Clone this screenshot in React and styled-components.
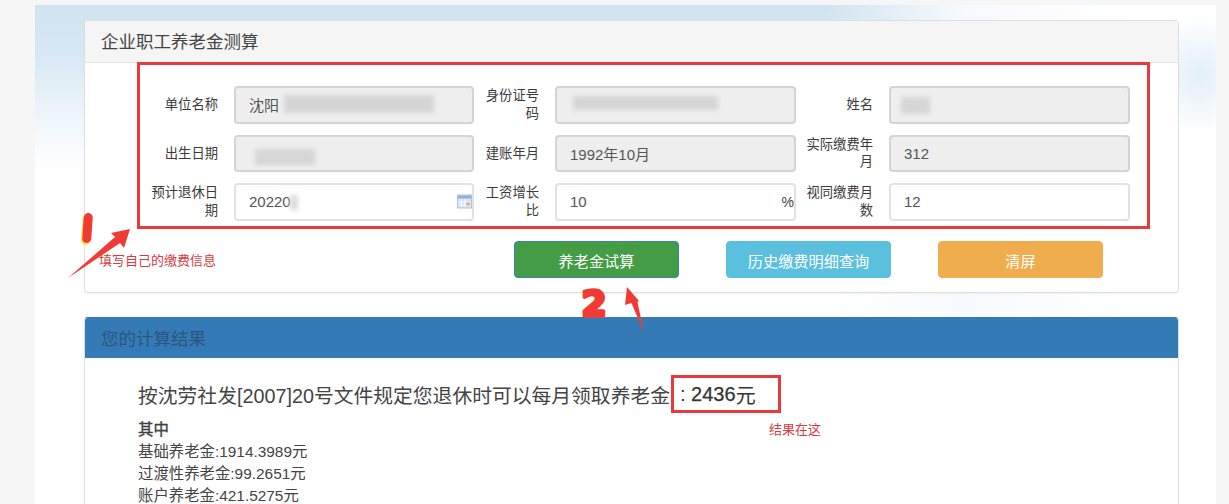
import React from 'react';
import styled, { createGlobalStyle } from 'styled-components';

const CJK = '"Liberation Sans", "Noto Sans CJK SC", sans-serif';

const GlobalStyle = createGlobalStyle`
  html, body {
    margin: 0;
    height: 504px;
    overflow: hidden;
    background: #f6f6f6;
    font-family: ${CJK};
    color: #333;
  }
  * {
    box-sizing: border-box;
  }
`;

const Shell = styled.div`
  position: relative;
  width: 1181px;
  height: 499px;
  margin: 5px 0 0 35px;
  padding: 15px 37px 0 49px;
  overflow: hidden;
  background:
    radial-gradient(ellipse 60px 60px at 1165px 70px, #e3eff7 0, rgba(255, 255, 255, 0) 100%),
    linear-gradient(90deg, rgba(255, 255, 255, 0) 0, rgba(255, 255, 255, 0) 790px, #f7fafc 930px, #fff 1100px),
    linear-gradient(180deg, #cfe4f1 0, #d6e8f3 50px, #eef5fa 110px, #fff 165px);
`;

const Panel = styled.section`
  background: #fff;
  border: 1px solid #ddd;
  border-top-color: ${({ $primary }) => ($primary ? '#337ab7' : '#ddd')};
  border-radius: 4px;
  box-shadow: 0 1px 1px rgba(0, 0, 0, 0.05);
  margin-bottom: 24px;
`;

const PanelHeader = styled.h3`
  margin: 0;
  height: ${({ $primary }) => ($primary ? '40px' : '42px')};
  padding: 0 16px ${({ $primary }) => ($primary ? '0' : '2px')};
  display: flex;
  align-items: center;
  font-size: 17.5px;
  font-weight: 400;
  color: ${({ $primary }) => ($primary ? '#2b577c' : '#444')};
  background: ${({ $primary }) => ($primary ? '#337ab7' : '#f5f5f5')};
  border-bottom: 1px solid ${({ $primary }) => ($primary ? '#337ab7' : '#e4e4e4')};
  border-radius: 3px 3px 0 0;
`;

const FormGrid = styled.div`
  display: grid;
  grid-template-columns: 86px 240px 81px 241px 93px 241px;
  grid-auto-rows: 37.5px;
  row-gap: 11px;
  width: 1013px;
  margin: -1px 0 0 52px;
  padding: 21px 0 5.5px 8px;
  border: 3px solid #e8393d;
`;

const FieldLabel = styled.label`
  align-self: center;
  padding-right: 16px;
  text-align: right;
  font-size: 13.3px;
  line-height: 17.5px;
  color: #3a3a3a;
`;

const FieldBox = styled.div`
  position: relative;
`;

const Input = styled.input`
  display: block;
  width: 100%;
  height: 100%;
  padding: 0 13px;
  font-family: ${CJK};
  font-size: 15px;
  color: #555;
  background: ${({ readOnly }) => (readOnly ? '#eee' : '#fff')};
  border: 2px solid ${({ readOnly }) => (readOnly ? '#d4d4d4' : '#e2e2e2')};
  border-radius: 4px;
  outline: none;
`;

const Smudge = styled.span`
  position: absolute;
  top: ${({ $top }) => $top}px;
  left: ${({ $left }) => $left}px;
  width: ${({ $width }) => $width}px;
  height: ${({ $height }) => $height}px;
  background: ${({ $tone }) => $tone || '#d6d6d6'};
  filter: blur(2px);
  pointer-events: none;
`;

const Suffix = styled.span`
  position: absolute;
  top: 11px;
  right: 2px;
  font-size: 14px;
  color: #444;
`;

const CalendarIcon = styled.svg`
  position: absolute;
  top: 11px;
  right: 2px;
  width: 15px;
  height: 15px;
`;

const ButtonRow = styled.div`
  display: flex;
  align-items: flex-start;
  gap: 47px;
  padding: 12px 0 14px 14px;
`;

const NoteText = styled.span`
  font-size: 13px;
  line-height: 16px;
  color: #d93a3e;
  white-space: nowrap;
`;

const FormNote = styled(NoteText)`
  width: 368px;
  margin-top: 12px;
`;

const ActionButton = styled.button`
  width: 165px;
  height: 37px;
  font-family: ${CJK};
  font-size: 15.2px;
  color: #fff;
  background: ${({ $color }) => $color};
  border: 1px solid ${({ $edge, $color }) => $edge || $color};
  border-radius: 4px;
`;

const ResultBody = styled.div`
  padding: 17px 0 0 53px;
`;

const ResultLine = styled.div`
  display: flex;
  align-items: center;
  height: 38px;
  font-size: 19.8px;
  color: #444;
`;

const ResultText = styled.span`
  padding-top: 1px;
  width: 533px;
  white-space: nowrap;
`;

const Amount = styled.span`
  width: 110px;
  height: 38px;
  display: flex;
  align-items: center;
  padding: 1px 0 0 6px;
  font-size: 20px;
  color: #333;
  border: 3px solid #e8393d;
`;

const AmountDigits = styled.span`
  -webkit-text-stroke: 0.25px #333;
`;

const DetailRow = styled.div`
  display: grid;
  grid-template-columns: 631px auto;
  padding-top: 5.5px;
`;

const ResultNote = styled(NoteText)`
  margin-top: 3.5px;
`;

const DetailLine = styled.div`
  font-size: 15.4px;
  line-height: 22.3px;
  color: #444;
  -webkit-text-stroke: ${({ $strong }) => ($strong ? '0.35px #333' : '0')};
`;

const NoteArrow = styled.svg`
  position: absolute;
  left: ${({ $left }) => $left}px;
  top: ${({ $top }) => $top}px;
  pointer-events: none;
`;

const BrushOne = styled.span`
  position: absolute;
  left: 48px;
  top: 208px;
  width: 9px;
  height: 30px;
  background: #f23a35;
  border-radius: 4.5px;
  box-shadow: -1px 2px 1px #f6e23a;
  transform: rotate(4deg);
`;

const rows = [
  { label: '单位名称', value: '沈阳', smudges: [{ top: 9, left: 50, width: 150, height: 18 }] },
  { label: '身份证号码', value: '', smudges: [{ top: 10, left: 18, width: 145, height: 14 }] },
  { label: '姓名', value: '', smudges: [{ top: 11, left: 12, width: 29, height: 17 }] },
  { label: '出生日期', value: '', smudges: [{ top: 14, left: 21, width: 60, height: 16 }] },
  { label: '建账年月', value: '1992年10月' },
  { label: '实际缴费年月', value: '312' },
  {
    label: '预计退休日期',
    value: '20220',
    editable: true,
    calendar: true,
    smudges: [{ top: 12, left: 56, width: 8, height: 15, tone: '#dcdcdc' }],
  },
  { label: '工资增长比', value: '10', editable: true, suffix: '%' },
  { label: '视同缴费月数', value: '12', editable: true },
];

const details = ['基础养老金:1914.3989元', '过渡性养老金:99.2651元', '账户养老金:421.5275元'];

const App = () => (
  <>
    <GlobalStyle />
    <Shell>
      <Panel>
        <PanelHeader>企业职工养老金测算</PanelHeader>
        <FormGrid>
          {rows.map((field) => (
            <React.Fragment key={field.label}>
              <FieldLabel>{field.label}</FieldLabel>
              <FieldBox>
                <Input readOnly={!field.editable} defaultValue={field.value} />
                {field.smudges &&
                  field.smudges.map((s) => (
                    <Smudge key={s.left} $top={s.top} $left={s.left} $width={s.width} $height={s.height} $tone={s.tone} />
                  ))}
                {field.suffix && <Suffix>{field.suffix}</Suffix>}
                {field.calendar && (
                  <CalendarIcon viewBox="0 0 15 15">
                    <rect x="0.5" y="1" width="14" height="13" fill="#d5e3f2" stroke="#a9c3de" />
                    <rect x="1" y="1.5" width="13" height="3" fill="#8fb2d8" />
                    <path d="M4.5 5v8M8 5v8M1 8h13M1 11h13" stroke="#fff" strokeWidth="0.8" />
                    <rect x="9" y="8.5" width="4" height="3" fill="#e6a9a9" />
                  </CalendarIcon>
                )}
              </FieldBox>
            </React.Fragment>
          ))}
        </FormGrid>
        <ButtonRow>
          <FormNote>填写自己的缴费信息</FormNote>
          <ActionButton $color="#449d44" $edge="#3a7fb5">养老金试算</ActionButton>
          <ActionButton $color="#5bc0de">历史缴费明细查询</ActionButton>
          <ActionButton $color="#f0ad4e">清屏</ActionButton>
        </ButtonRow>
      </Panel>
      <Panel $primary>
        <PanelHeader $primary>您的计算结果</PanelHeader>
        <ResultBody>
          <ResultLine>
            <ResultText>按沈劳社发[2007]20号文件规定您退休时可以每月领取养老金</ResultText>
            <Amount>
              : <AmountDigits>&nbsp;2436</AmountDigits>元
            </Amount>
          </ResultLine>
          <DetailRow>
            <div>
              <DetailLine $strong>其中</DetailLine>
              {details.map((line) => (
                <DetailLine key={line}>{line}</DetailLine>
              ))}
            </div>
            <ResultNote>结果在这</ResultNote>
          </DetailRow>
        </ResultBody>
      </Panel>

      <BrushOne aria-label="1" />
      <NoteArrow $left={539} $top={270} width="40" height="48" viewBox="0 0 40 48">
        <text
          x="20"
          y="41"
          textAnchor="middle"
          fontFamily="DejaVu Sans, sans-serif"
          fontWeight="700"
          fontSize="36"
          fill="#f23a35"
          stroke="#f23a35"
          strokeWidth="3.5"
          strokeLinejoin="round"
        >
          2
        </text>
      </NoteArrow>
      <NoteArrow $left={30} $top={220} width="70" height="56" viewBox="0 0 70 56">
        <path d="M3 53 L50 12 L46 8 L65 4 L59 23 L55 18 Z" fill="#f23a35" />
      </NoteArrow>
      <NoteArrow $left={585} $top={280} width="30" height="52" viewBox="0 0 30 52">
        <path d="M7 2 L19 16 L17.5 17 L24 48 L11.5 18 L5 20 Z" fill="#f23a35" />
      </NoteArrow>
    </Shell>
  </>
);

export default App;
